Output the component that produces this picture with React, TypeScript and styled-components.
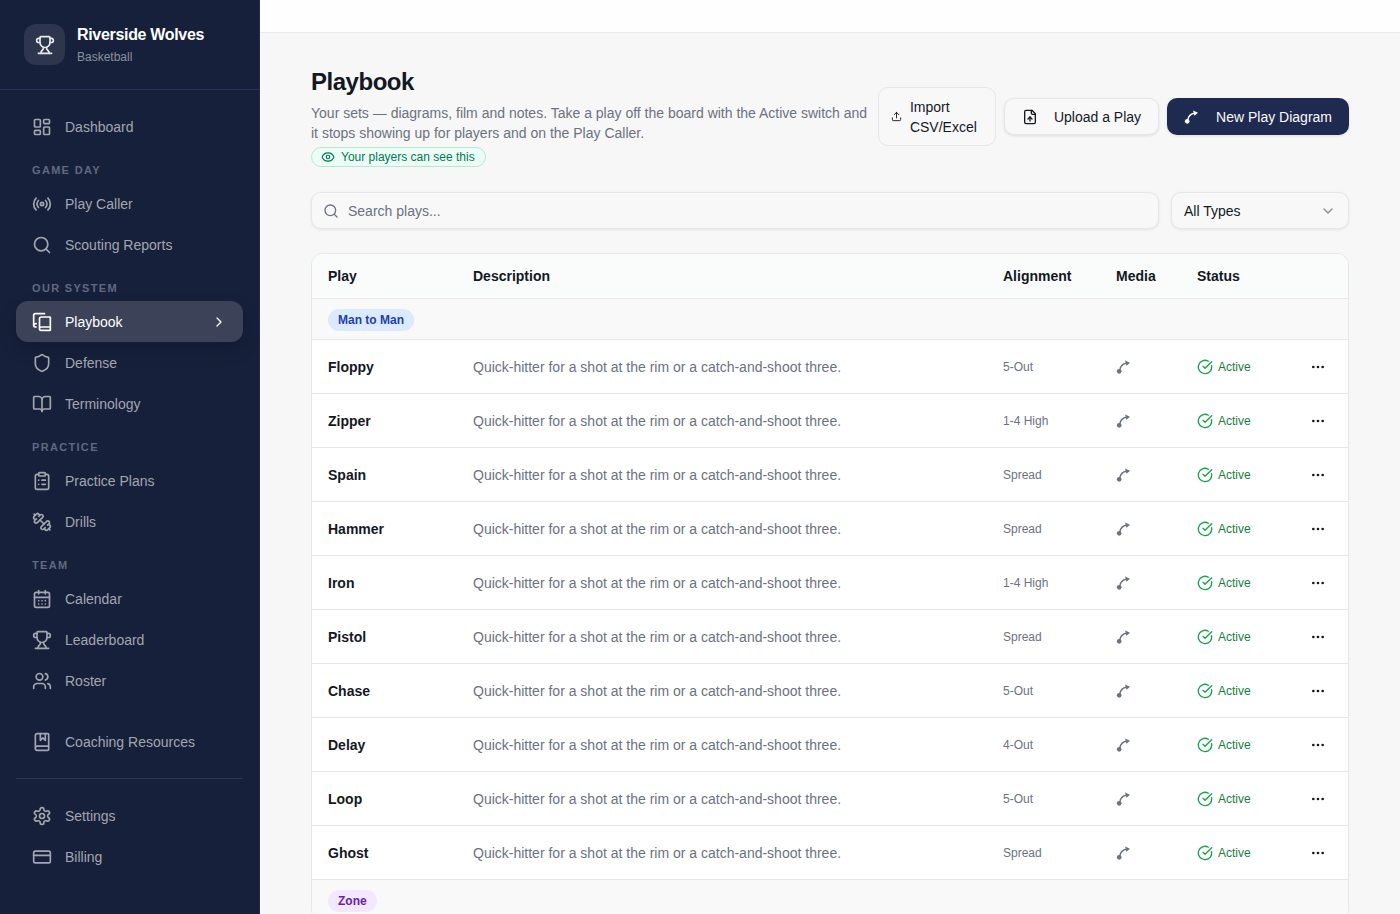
import React from "react";
import styled, { createGlobalStyle, css } from "styled-components";
import {
  BookMarked,
  BookOpen,
  CalendarDays,
  ChevronDown,
  ChevronRight,
  CircleCheckBig,
  ClipboardList,
  CreditCard,
  Ellipsis,
  Eye,
  LayoutDashboard,
  Radio,
  Search,
  Shield,
  Trophy,
  Upload,
  Users,
} from "lucide-react";

const GlobalStyle = createGlobalStyle`
  *, *::before, *::after { box-sizing: border-box; }
  body {
    margin: 0;
    background: #f7f7f7;
    color: #14181f;
    font-family: "Liberation Sans", Arial, sans-serif;
    font-size: 14px;
    line-height: 20px;
  }
  button, input, select { font: inherit; color: inherit; }
  h1, p, ul { margin: 0; padding: 0; }
  svg { display: block; flex: none; }
`;

const Shell = styled.div`
  display: flex;
  height: 100vh;
`;

const Sidebar = styled.aside`
  display: flex;
  flex-direction: column;
  flex: none;
  width: 260px;
  background: #17203a;
  border-right: 1px solid #222c50;
  overflow: hidden;
`;

const Brand = styled.div`
  display: flex;
  align-items: center;
  flex: none;
  gap: 12px;
  height: 90px;
  padding: 0 24px;
  border-bottom: 1px solid #26315a;
`;

const BrandMark = styled.div`
  display: grid;
  place-items: center;
  width: 41px;
  height: 41px;
  border-radius: 12px;
  background: #2e364e;
  color: #e8e9ec;
`;

const BrandName = styled.div`
  color: #fff;
  font-size: 16px;
  font-weight: 700;
  line-height: 24px;
  letter-spacing: -0.02em;
`;

const BrandSport = styled.div`
  color: #8b90a0;
  font-size: 12px;
`;

const Nav = styled.nav`
  padding: 16px;
`;

const NavList = styled.ul`
  list-style: none;
`;

const NavLabel = styled.h2`
  margin: 0;
  padding: 16px 16px 6px;
  color: #616880;
  font-size: 11px;
  font-weight: 700;
  line-height: 14px;
  letter-spacing: 0.12em;
  text-transform: uppercase;
`;

const NavLink = styled.a<{ $active?: boolean }>`
  display: flex;
  align-items: center;
  gap: 13px;
  height: 41px;
  padding: 0 16px;
  border-radius: 12px;
  color: #a2a6b0;
  text-decoration: none;
  ${(p) =>
    p.$active &&
    css`
      background: #3c4359;
      color: #fff;
      box-shadow: 0 8px 16px rgba(10, 15, 35, 0.3);
    `}
`;

const NavText = styled.span`
  flex: 1;
`;

const NavExtra = styled(NavList)`
  padding-top: 20px;
`;

const NavFooter = styled(NavList)`
  margin-top: 16px;
  padding-top: 16px;
  border-top: 1px solid #2a3458;
`;

const Main = styled.main`
  flex: 1;
  min-width: 0;
  overflow-y: auto;
  scrollbar-width: none;
`;

const TopBar = styled.div`
  height: 33px;
  background: #fefefe;
  border-bottom: 1px solid #ebebed;
`;

const Content = styled.div`
  padding: 33px 51px 48px;
`;

const PageHeader = styled.header`
  display: flex;
  align-items: center;
  margin-bottom: 25px;
`;

const Intro = styled.div`
  flex: 1;
  min-width: 0;
`;

const Title = styled.h1`
  margin-bottom: 5px;
  font-size: 24px;
  font-weight: 700;
  line-height: 32px;
  letter-spacing: -0.02em;
`;

const Lead = styled.p`
  color: #6b7280;
`;

const VisibilityBadge = styled.span`
  display: inline-flex;
  align-items: center;
  gap: 6px;
  height: 20px;
  margin-top: 4px;
  padding: 0 10px 0 9px;
  border: 1px solid #b4ead2;
  border-radius: 10px;
  background: #ecfdf5;
  color: #047857;
  font-size: 12px;
  line-height: 18px;
  vertical-align: top;
`;

const Actions = styled.div`
  display: flex;
  align-items: center;
  gap: 8px;
  flex: none;
`;

const Button = styled.button<{ $variant?: "primary" }>`
  display: inline-flex;
  align-items: center;
  gap: 16px;
  height: 37px;
  padding: 0 17px;
  border: ${(p) => (p.$variant === "primary" ? "0" : "1px solid #e5e7eb")};
  border-radius: 10px;
  background: ${(p) => (p.$variant === "primary" ? "#1f2a50" : "#f8f8f8")};
  color: ${(p) => (p.$variant === "primary" ? "#fafafa" : "inherit")};
  box-shadow: 0 1px 3px rgba(0, 0, 0, 0.1);
  white-space: nowrap;
`;

const ImportButton = styled(Button)`
  gap: 8px;
  width: 118px;
  height: 59px;
  padding: 0 12px;
  box-shadow: none;
  text-align: left;
  white-space: normal;
`;

const Filters = styled.div`
  display: flex;
  gap: 12px;
  margin-bottom: 24px;
`;

const fieldFrame = css`
  height: 37px;
  border: 1px solid #e5e7eb;
  border-radius: 10px;
  background: #f8f8f8;
  box-shadow: 0 1px 3px rgba(0, 0, 0, 0.08);
`;

const SearchField = styled.label`
  ${fieldFrame}
  display: flex;
  flex: 1;
  align-items: center;
  gap: 9px;
  padding: 0 11px;
  color: #6b7280;
`;

const SearchInput = styled.input`
  flex: 1;
  min-width: 0;
  padding: 0;
  border: 0;
  outline: 0;
  background: none;
  &::placeholder {
    color: #6b7280;
    opacity: 1;
  }
`;

const SelectField = styled.div`
  display: grid;
  align-items: center;
  width: 178px;
  > * {
    grid-area: 1 / 1;
  }
  > svg {
    justify-self: end;
    margin-right: 13px;
    color: #8a8c90;
    pointer-events: none;
  }
`;

const TypeSelect = styled.select`
  ${fieldFrame}
  width: 100%;
  padding: 0 36px 0 12px;
  appearance: none;
`;

const TableCard = styled.div`
  overflow: hidden;
  border: 1px solid #e5e7eb;
  border-radius: 12px;
  background: #fff;
`;

const Table = styled.table`
  width: 100%;
  border-collapse: separate;
  border-spacing: 0;
  table-layout: fixed;
  text-align: left;
`;

const HeadCell = styled.th<{ $width?: number }>`
  width: ${(p) => (p.$width ? `${p.$width}px` : "auto")};
  height: 45px;
  padding: 0 16px;
  border-bottom: 1px solid #e5e7eb;
  background: #fafcfb;
  font-weight: 700;
`;

const GroupCell = styled.th`
  height: 41px;
  padding: 2px 16px 0;
  border-bottom: 1px solid #e5e7eb;
  background: #f9f9f9;
`;

const GroupTag = styled.span<{ $tone: "blue" | "purple" }>`
  display: inline-block;
  padding: 1px 10px;
  border-radius: 11px;
  background: ${(p) => (p.$tone === "blue" ? "#dbeafe" : "#f3e8ff")};
  color: ${(p) => (p.$tone === "blue" ? "#1e40af" : "#6b21a8")};
  font-size: 12px;
  font-weight: 700;
  vertical-align: middle;
`;

const Cell = styled.td<{ $muted?: boolean; $small?: boolean }>`
  height: 54px;
  padding: 0 16px;
  border-bottom: 1px solid #e5e7eb;
  color: ${(p) => (p.$muted ? "#6b7280" : "inherit")};
  font-size: ${(p) => (p.$small ? "12px" : "14px")};
`;

const NameCell = styled(Cell)`
  font-weight: 700;
`;

const Status = styled.span`
  display: flex;
  align-items: center;
  gap: 5px;
  color: #15803d;
  svg {
    color: #16a34a;
  }
`;

const MenuButton = styled.button`
  display: grid;
  place-items: center;
  width: 28px;
  height: 28px;
  padding: 0;
  border: 0;
  border-radius: 8px;
  background: none;
`;

type IconProps = { size?: number };

function StrokeIcon({ size = 20, children }: IconProps & { children: React.ReactNode }) {
  return (
    <svg
      width={size}
      height={size}
      viewBox="0 0 24 24"
      fill="none"
      stroke="currentColor"
      strokeWidth="2"
      strokeLinecap="round"
      strokeLinejoin="round"
      aria-hidden="true"
    >
      {children}
    </svg>
  );
}

function BooksIcon({ size }: IconProps) {
  return (
    <StrokeIcon size={size}>
      <path d="M2 16V4a2 2 0 0 1 2-2h11" />
      <path d="M22 18H11a2 2 0 1 0 0 4h10.5a.5.5 0 0 0 .5-.5v-15a.5.5 0 0 0-.5-.5H11a2 2 0 0 0-2 2v12" />
      <path d="M5 14H4a2 2 0 1 0 0 4h1" />
    </StrokeIcon>
  );
}

function DumbbellIcon({ size }: IconProps) {
  return (
    <StrokeIcon size={size}>
      <path d="M14.4 14.4 9.6 9.6" />
      <path d="M18.657 21.485a2 2 0 1 1-2.829-2.828l-1.767 1.768a2 2 0 1 1-2.829-2.829l6.364-6.364a2 2 0 1 1 2.829 2.829l-1.768 1.767a2 2 0 1 1 2.828 2.829z" />
      <path d="m21.5 21.5-1.4-1.4" />
      <path d="M3.9 3.9 2.5 2.5" />
      <path d="M6.404 12.768a2 2 0 1 1-2.829-2.829l1.768-1.767a2 2 0 1 1-2.828-2.829l2.828-2.828a2 2 0 1 1 2.829 2.828l1.767-1.768a2 2 0 1 1 2.829 2.829z" />
    </StrokeIcon>
  );
}

function GearIcon({ size }: IconProps) {
  return (
    <StrokeIcon size={size}>
      <path d="M12.22 2h-.44a2 2 0 0 0-2 2v.18a2 2 0 0 1-1 1.73l-.43.25a2 2 0 0 1-2 0l-.15-.08a2 2 0 0 0-2.73.73l-.22.38a2 2 0 0 0 .73 2.73l.15.1a2 2 0 0 1 1 1.72v.51a2 2 0 0 1-1 1.74l-.15.09a2 2 0 0 0-.73 2.73l.22.38a2 2 0 0 0 2.73.73l.15-.08a2 2 0 0 1 2 0l.43.25a2 2 0 0 1 1 1.73V20a2 2 0 0 0 2 2h.44a2 2 0 0 0 2-2v-.18a2 2 0 0 1 1-1.73l.43-.25a2 2 0 0 1 2 0l.15.08a2 2 0 0 0 2.73-.73l.22-.39a2 2 0 0 0-.73-2.73l-.15-.08a2 2 0 0 1-1-1.74v-.5a2 2 0 0 1 1-1.74l.15-.09a2 2 0 0 0 .73-2.73l-.22-.38a2 2 0 0 0-2.73-.73l-.15.08a2 2 0 0 1-2 0l-.43-.25a2 2 0 0 1-1-1.73V4a2 2 0 0 0-2-2z" />
      <circle cx="12" cy="12" r="3" />
    </StrokeIcon>
  );
}

function FileUpIcon({ size }: IconProps) {
  return (
    <StrokeIcon size={size}>
      <path d="M15 2H6a2 2 0 0 0-2 2v16a2 2 0 0 0 2 2h12a2 2 0 0 0 2-2V7Z" />
      <path d="M14 2v4a2 2 0 0 0 2 2h4" />
      <path d="M12 12v6" />
      <path d="m15 15-3-3-3 3" />
    </StrokeIcon>
  );
}

function RouteIcon({ size = 16 }: IconProps) {
  return (
    <svg width={size} height={size} viewBox="0 0 24 24" fill="none" aria-hidden="true">
      <circle cx="4.8" cy="18.5" r="3.5" fill="currentColor" />
      <path
        d="M5.5 17C6.5 11 10 7 16 6.4"
        stroke="currentColor"
        strokeWidth="2.2"
        strokeLinecap="round"
      />
      <path d="M13.5 2.4L21 5.8L15.8 10Z" fill="currentColor" />
    </svg>
  );
}

type NavEntry = {
  icon: React.ComponentType<{ size?: number }>;
  text: string;
  active?: boolean;
};

const navGroups: { label?: string; items: NavEntry[] }[] = [
  { items: [{ icon: LayoutDashboard, text: "Dashboard" }] },
  {
    label: "Game Day",
    items: [
      { icon: Radio, text: "Play Caller" },
      { icon: Search, text: "Scouting Reports" },
    ],
  },
  {
    label: "Our System",
    items: [
      { icon: BooksIcon, text: "Playbook", active: true },
      { icon: Shield, text: "Defense" },
      { icon: BookOpen, text: "Terminology" },
    ],
  },
  {
    label: "Practice",
    items: [
      { icon: ClipboardList, text: "Practice Plans" },
      { icon: DumbbellIcon, text: "Drills" },
    ],
  },
  {
    label: "Team",
    items: [
      { icon: CalendarDays, text: "Calendar" },
      { icon: Trophy, text: "Leaderboard" },
      { icon: Users, text: "Roster" },
    ],
  },
];

function NavItem({ icon: Icon, text, active }: NavEntry) {
  return (
    <li>
      <NavLink href="#" $active={active} aria-current={active ? "page" : undefined}>
        <Icon size={20} />
        <NavText>{text}</NavText>
        {active && <ChevronRight size={16} />}
      </NavLink>
    </li>
  );
}

const plays: [string, string][] = [
  ["Floppy", "5-Out"],
  ["Zipper", "1-4 High"],
  ["Spain", "Spread"],
  ["Hammer", "Spread"],
  ["Iron", "1-4 High"],
  ["Pistol", "Spread"],
  ["Chase", "5-Out"],
  ["Delay", "4-Out"],
  ["Loop", "5-Out"],
  ["Ghost", "Spread"],
];

export default function App() {
  return (
    <>
      <GlobalStyle />
      <Shell>
        <Sidebar>
          <Brand>
            <BrandMark>
              <Trophy size={20} />
            </BrandMark>
            <div>
              <BrandName>Riverside Wolves</BrandName>
              <BrandSport>Basketball</BrandSport>
            </div>
          </Brand>
          <Nav>
            {navGroups.map((group, i) => (
              <React.Fragment key={i}>
                {group.label && <NavLabel>{group.label}</NavLabel>}
                <NavList>
                  {group.items.map((item) => (
                    <NavItem key={item.text} {...item} />
                  ))}
                </NavList>
              </React.Fragment>
            ))}
            <NavExtra>
              <NavItem icon={BookMarked} text="Coaching Resources" />
            </NavExtra>
            <NavFooter>
              <NavItem icon={GearIcon} text="Settings" />
              <NavItem icon={CreditCard} text="Billing" />
            </NavFooter>
          </Nav>
        </Sidebar>
        <Main>
          <TopBar />
          <Content>
            <PageHeader>
              <Intro>
                <Title>Playbook</Title>
                <Lead>
                  Your sets — diagrams, film and notes. Take a play off the board with the Active
                  switch and it stops showing up for players and on the Play Caller.
                </Lead>
                <VisibilityBadge>
                  <Eye size={14} />
                  Your players can see this
                </VisibilityBadge>
              </Intro>
              <Actions>
                <ImportButton type="button">
                  <Upload size={11} />
                  <span>Import CSV/Excel</span>
                </ImportButton>
                <Button type="button">
                  <FileUpIcon size={16} />
                  Upload a Play
                </Button>
                <Button type="button" $variant="primary">
                  <RouteIcon />
                  New Play Diagram
                </Button>
              </Actions>
            </PageHeader>
            <Filters>
              <SearchField>
                <Search size={16} />
                <SearchInput type="text" placeholder="Search plays..." aria-label="Search plays" />
              </SearchField>
              <SelectField>
                <TypeSelect aria-label="Play type" defaultValue="all">
                  <option value="all">All Types</option>
                  <option value="man">Man to Man</option>
                  <option value="zone">Zone</option>
                </TypeSelect>
                <ChevronDown size={16} />
              </SelectField>
            </Filters>
            <TableCard>
              <Table>
                <thead>
                  <tr>
                    <HeadCell $width={145}>Play</HeadCell>
                    <HeadCell>Description</HeadCell>
                    <HeadCell $width={113}>Alignment</HeadCell>
                    <HeadCell $width={81}>Media</HeadCell>
                    <HeadCell $width={107}>Status</HeadCell>
                    <HeadCell $width={60} aria-label="Actions" />
                  </tr>
                </thead>
                <tbody>
                  <tr>
                    <GroupCell colSpan={6} scope="rowgroup">
                      <GroupTag $tone="blue">Man to Man</GroupTag>
                    </GroupCell>
                  </tr>
                  {plays.map(([name, alignment]) => (
                    <tr key={name}>
                      <NameCell>{name}</NameCell>
                      <Cell $muted>Quick-hitter for a shot at the rim or a catch-and-shoot three.</Cell>
                      <Cell $muted $small>
                        {alignment}
                      </Cell>
                      <Cell $muted>
                        <RouteIcon />
                      </Cell>
                      <Cell $small>
                        <Status>
                          <CircleCheckBig size={16} />
                          Active
                        </Status>
                      </Cell>
                      <Cell>
                        <MenuButton type="button" aria-label={`Actions for ${name}`}>
                          <Ellipsis size={16} />
                        </MenuButton>
                      </Cell>
                    </tr>
                  ))}
                  <tr>
                    <GroupCell colSpan={6} scope="rowgroup">
                      <GroupTag $tone="purple">Zone</GroupTag>
                    </GroupCell>
                  </tr>
                </tbody>
              </Table>
            </TableCard>
          </Content>
        </Main>
      </Shell>
    </>
  );
}
